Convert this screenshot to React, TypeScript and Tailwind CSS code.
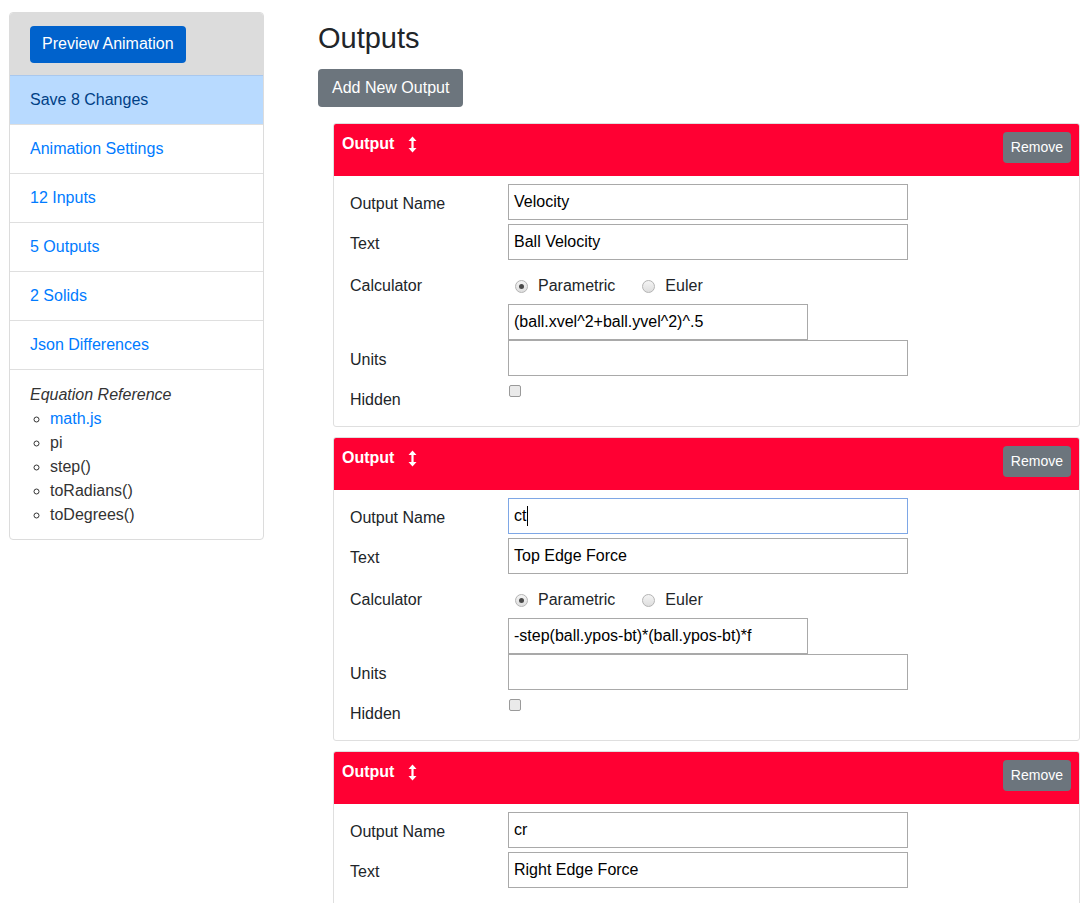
type Output = {
  name: string;
  text: string;
  equation: string;
  focused?: boolean;
  partial?: boolean;
};

const outputs: Output[] = [
  { name: 'Velocity', text: 'Ball Velocity', equation: '(ball.xvel^2+ball.yvel^2)^.5' },
  { name: 'ct', text: 'Top Edge Force', equation: '-step(ball.ypos-bt)*(ball.ypos-bt)*f', focused: true },
  { name: 'cr', text: 'Right Edge Force', equation: '-step(ball.xpos-br)*(ball.xpos-br)*f', partial: true },
];

const navItems = ['Animation Settings', '12 Inputs', '5 Outputs', '2 Solids', 'Json Differences'];
const refs = ['pi', 'step()', 'toRadians()', 'toDegrees()'];

function Field({ value, width = 'w-[400px]', focused = false }: { value: string; width?: string; focused?: boolean }) {
  return (
    <div
      className={`${width} h-9 flex items-center px-[5px] border bg-white text-[16px] text-black ${
        focused ? 'border-[#7ea7e6]' : 'border-[#a9a9a9]'
      }`}
    >
      <span>{value}</span>
      {focused && <span className="ml-px inline-block w-px h-5 bg-black" />}
    </div>
  );
}

function Radio({ checked, label }: { checked: boolean; label: string }) {
  return (
    <div className="flex items-center">
      <span className="w-[13px] h-[13px] rounded-full border border-[#b4b4b4] bg-gradient-to-b from-[#f4f4f4] to-[#dedede] flex items-center justify-center">
        {checked && <span className="w-[5px] h-[5px] rounded-full bg-[#4a4a4a]" />}
      </span>
      <span className="ml-[10px]">{label}</span>
    </div>
  );
}

function Row({ label, children, className = '' }: { label: string; children: React.ReactNode; className?: string }) {
  return (
    <div className={`flex items-center ${className}`}>
      <div className="w-[158px] pt-1">{label}</div>
      {children}
    </div>
  );
}

function OutputCard({ o }: { o: Output }) {
  return (
    <div className="border border-[#dfdfdf] rounded-[3px] mb-[10px] overflow-hidden">
      <div className="h-[52px] bg-[#ff0033] flex items-start justify-between px-2 pt-2">
        <div className="h-6 flex items-center text-white font-bold text-[16px]">
          Output
          <svg className="ml-[14px]" width="9" height="17" viewBox="0 0 9 17">
            <path d="M4.5 0.5 L8.5 5 L5.6 5 L5.6 12 L8.5 12 L4.5 16.5 L0.5 12 L3.4 12 L3.4 5 L0.5 5 Z" fill="white" />
          </svg>
        </div>
        <button className="h-[31px] px-[8px] rounded-[4px] bg-[#6c757d] text-white text-[14px]">Remove</button>
      </div>
      <div className="pl-4 pt-2 pb-2 text-[16px] text-[#212529]">
        <Row label="Output Name" className="mb-1">
          <Field value={o.name} focused={o.focused} />
        </Row>
        <Row label="Text" className="mb-1">
          <Field value={o.text} />
        </Row>
        {!o.partial && (
          <>
            <Row label="Calculator" className="h-10">
              <div className="flex items-center pl-[7px] pt-1 gap-[27px]">
                <Radio checked label="Parametric" />
                <Radio checked={false} label="Euler" />
              </div>
            </Row>
            <div className="pl-[158px]">
              <Field value={o.equation} width="w-[300px]" />
            </div>
            <Row label="Units" className="mb-1">
              <Field value="" />
            </Row>
            <div className="flex h-[38px]">
              <div className="w-[158px] self-end pb-[6px]">Hidden</div>
              <div className="pt-[5px] pl-px">
                <span className="block w-[12px] h-[12px] rounded-[2px] border border-[#9a9a9a] bg-[#eaeaea]" />
              </div>
            </div>
          </>
        )}
        {o.partial && <div className="h-10" />}
      </div>
    </div>
  );
}

export default function App() {
  return (
    <div
      className="flex w-[1089px] h-[903px] overflow-hidden bg-white text-[#212529]"
      style={{ fontFamily: '"Liberation Sans", Arial, sans-serif' }}
    >
      <div className="ml-[9px] mt-3 w-[255px] self-start border border-[#dcdcdc] rounded-[4px] overflow-hidden text-[16px]">
        <div className="h-[62px] bg-[#dcdcdc] flex items-center pl-5">
          <button className="h-[37px] px-3 rounded-[4px] bg-[#0062cc] text-white text-[16px]">Preview Animation</button>
        </div>
        <div className="h-[49px] bg-[#b8daff] text-[#004085] flex items-center pl-5 border-t border-[#a9c8ee]">
          Save 8 Changes
        </div>
        {navItems.map((item) => (
          <div key={item} className="h-[49px] flex items-center pl-5 border-t border-[#dfdfdf] text-[#007bff]">
            {item}
          </div>
        ))}
        <div className="border-t border-[#dfdfdf] pl-5 pt-[13px] pb-[12px] leading-6">
          <div className="italic text-[#333]">Equation Reference</div>
          <ul className="list-[circle] pl-5 text-[#333]">
            <li className="text-[#007bff] marker:text-[#333]">math.js</li>
            {refs.map((r) => (
              <li key={r}>{r}</li>
            ))}
          </ul>
        </div>
      </div>

      <div className="flex-1 pl-[54px] pr-[9px]">
        <h2 className="text-[29px] font-medium leading-none mt-[24px] text-[#212529]">Outputs</h2>
        <button className="mt-[16px] h-[38px] px-[14px] rounded-[4px] bg-[#6c757d] text-white text-[16px]">Add New Output</button>
        <div className="pl-[15px] mt-[16px]">
          {outputs.map((o) => (
            <OutputCard key={o.name} o={o} />
          ))}
        </div>
      </div>
    </div>
  );
}
